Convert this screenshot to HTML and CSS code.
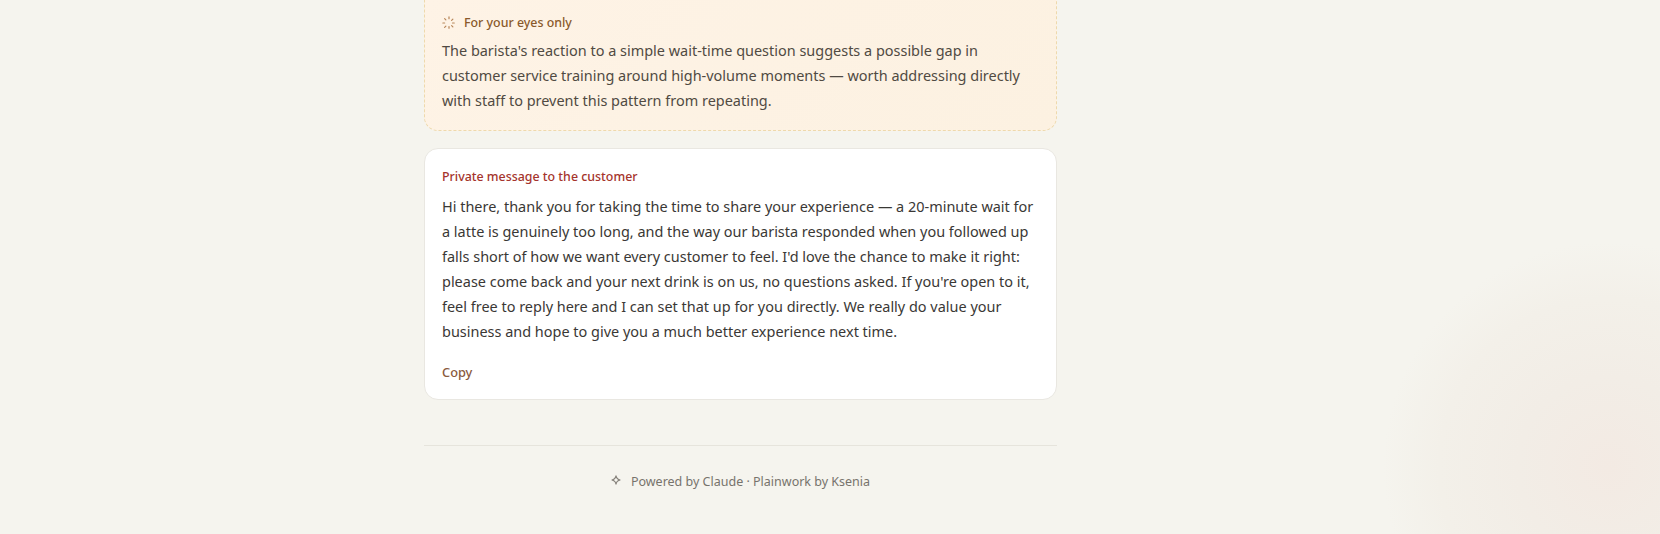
FILE: index.html
```html
<!DOCTYPE html>
<html lang="en">
<head>
<meta charset="utf-8">
<title>Plainwork</title>
<link rel="stylesheet" href="styles.css">
</head>
<body>
<main class="column">
  <section class="card note">
    <h2 class="label note-label">
      <svg class="spinner" viewBox="0 0 16 16" width="14" height="14" aria-hidden="true">
        <path d="M8 1v3M8 12v3M1 8h3M12 8h3M3 3l2 2M11 11l2 2M3 13l2-2M11 5l2-2"/>
      </svg>
      For your eyes only
    </h2>
    <p class="text note-text">The barista's reaction to a simple wait-time question suggests a possible gap in customer service training around high-volume moments — worth addressing directly with staff to prevent this pattern from repeating.</p>
  </section>
  <section class="card message">
    <h2 class="label message-label">Private message to the customer</h2>
    <p class="text message-text">Hi there, thank you for taking the time to share your experience — a 20-minute wait for a latte is genuinely too long, and the way our barista responded when you followed up falls short of how we want every customer to feel. I'd love the chance to make it right: please come back and your next drink is on us, no questions asked. If you're open to it, feel free to reply here and I can set that up for you directly. We really do value your business and hope to give you a much better experience next time.</p>
    <button class="copy" type="button">Copy</button>
  </section>
  <footer class="footer">
    <svg class="sparkle" viewBox="0 0 12 12" width="10" height="10" aria-hidden="true">
      <path d="M6 .8C6.4 3.9 8 5.5 11.2 6 8 6.5 6.4 8.1 6 11.2 5.6 8.1 4 6.5.8 6 4 5.5 5.6 3.9 6 .8Z"/>
    </svg>
    <span>Powered by Claude · Plainwork by Ksenia</span>
  </footer>
</main>
</body>
</html>
```
FILE: styles.css
```css
* { box-sizing: border-box; }
html, body { height: 100%; }
body {
  margin: 0;
  overflow: hidden;
  background: radial-gradient(circle 225px at 1608px 467px, #f3eae3 0%, #f2ede6 40%, #f3f0e9 75%, #f5f4ee 100%) #f5f4ee;
  font-family: "Noto Sans", "Open Sans", sans-serif;
  color: #33312e;
}
.column {
  width: 633px;
  margin: -20px 0 0 424px;
  display: flex;
  flex-direction: column;
  gap: 17px;
}
.card {
  border-radius: 14px;
  padding: 16px 17px;
}
.note {
  background: linear-gradient(135deg, #fef3e6, #fcf1e1);
  border: 1px dashed #eed9ac;
  padding-top: 32px;
  padding-bottom: 17px;
}
.message {
  background: #fff;
  border: 1px solid #e9e7e1;
  padding-top: 18px;
  padding-bottom: 17px;
}
.label {
  margin: 0;
  font-size: 12.4px;
  line-height: 20px;
  font-weight: 500;
}
.note-label {
  color: #8a5a2b;
  display: flex;
  align-items: center;
  gap: 8px;
}
.message-label { color: #a5342c; }
.spinner {
  fill: none;
  stroke: #b8875a;
  stroke-width: 1.4;
  stroke-linecap: round;
  stroke-dasharray: 2 20;
}
.text {
  margin: 0;
  font-size: 14.46px;
  line-height: 25px;
}
.note-text { margin-top: 5px; color: #504a42; }
.message-text { margin-top: 7px; color: #3a3835; }
.copy {
  display: block;
  margin-top: 18px;
  padding: 0;
  border: 0;
  background: none;
  font: 500 12.8px/20px "Noto Sans", "Open Sans", sans-serif;
  color: #8a5a3c;
}
.footer {
  margin-top: 28px;
  border-top: 1px solid #e6e4dc;
  padding-top: 26px;
  display: flex;
  justify-content: center;
  align-items: center;
  gap: 10px;
  font-size: 12.5px;
  line-height: 20px;
  color: #77736c;
}
.sparkle {
  fill: none;
  stroke: #85817a;
  stroke-width: 1.4;
  margin-top: -4px;
}
```
